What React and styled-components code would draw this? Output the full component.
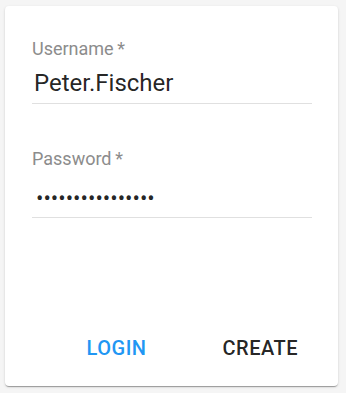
import React from "react";
import styled, { createGlobalStyle } from "styled-components";

const Global = createGlobalStyle`
  html, body { margin: 0; padding: 0; background: #f5f5f5; }
  body { font-family: Roboto, "Liberation Sans", Arial, sans-serif; }
  * { box-sizing: border-box; }
`;

const Page = styled.div`
  width: 346px;
  height: 393px;
  padding: 6px 8px 7px 5px;
`;

const Card = styled.form`
  width: 333px;
  height: 380px;
  background: #fff;
  border-radius: 4px;
  box-shadow: 0 2px 1px -1px rgba(0, 0, 0, 0.2), 0 1px 1px 0 rgba(0, 0, 0, 0.14),
    0 1px 3px 0 rgba(0, 0, 0, 0.12);
  display: flex;
  flex-direction: column;
  padding: 32px 26px 20px 27px;
`;

const Field = styled.label`
  display: flex;
  flex-direction: column;
  margin-top: ${(p) => p.$top || 0}px;
  border-bottom: 1px solid #e0e0e0;
  padding-bottom: ${(p) => p.$bottom || 6}px;
`;

const Label = styled.span`
  font-size: 18px;
  line-height: 21px;
  color: #8c8c8c;
`;

const Input = styled.input`
  margin-top: ${(p) => p.$gap || 10}px;
  border: none;
  outline: none;
  padding: 0 0 0 ${(p) => p.$indent || 2}px;
  background: transparent;
  font-family: Roboto, "Liberation Sans", Arial, sans-serif;
  font-size: ${(p) => p.$size || 24}px;
  line-height: 28px;
  height: 28px;
  color: rgba(0, 0, 0, 0.87);
  width: 100%;
`;

const Actions = styled.div`
  margin-top: auto;
  margin-right: -2px;
  display: flex;
  justify-content: flex-end;
  gap: 44px;
`;

const Button = styled.button`
  border: none;
  background: transparent;
  font-family: Roboto, "Liberation Sans", Arial, sans-serif;
  font-weight: 500;
  font-size: 20px;
  line-height: 36px;
  height: 36px;
  padding: 0 16px;
  letter-spacing: 0.5px;
  text-transform: uppercase;
  color: ${(p) => (p.$primary ? "#2196f3" : "rgba(0, 0, 0, 0.87)")};
  cursor: pointer;
`;

export default function App() {
  return (
    <>
      <Global />
      <Page>
        <Card onSubmit={(e) => e.preventDefault()}>
          <Field>
            <Label>Username{"\u2009"}*</Label>
            <Input type="text" defaultValue="Peter.Fischer" readOnly />
          </Field>
          <Field $top={44} $bottom={4}>
            <Label>Password{"\u2009"}*</Label>
            <Input
              type="password"
              defaultValue="secretpassword12"
              readOnly
              $gap={16}
              $size={22}
              $indent={4}
            />
          </Field>
          <Actions>
            <Button type="button" $primary>Login</Button>
            <Button type="button">Create</Button>
          </Actions>
        </Card>
      </Page>
    </>
  );
}
